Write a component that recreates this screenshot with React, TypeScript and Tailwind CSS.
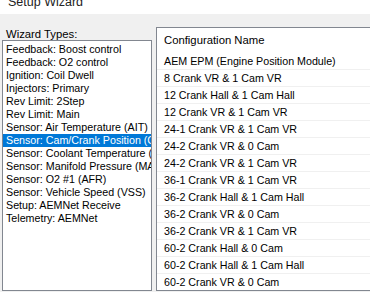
import React from 'react';

const wizardTypes = [
  'Feedback: Boost control',
  'Feedback: O2 control',
  'Ignition: Coil Dwell',
  'Injectors: Primary',
  'Rev Limit: 2Step',
  'Rev Limit: Main',
  'Sensor: Air Temperature (AIT)',
  'Sensor: Cam/Crank Position (CKP)',
  'Sensor: Coolant Temperature (CLT)',
  'Sensor: Manifold Pressure (MAP)',
  'Sensor: O2 #1 (AFR)',
  'Sensor: Vehicle Speed (VSS)',
  'Setup: AEMNet Receive',
  'Telemetry: AEMNet',
];

const configs = [
  'AEM EPM (Engine Position Module)',
  '8 Crank VR & 1 Cam VR',
  '12 Crank Hall & 1 Cam Hall',
  '12 Crank VR & 1 Cam VR',
  '24-1 Crank VR & 1 Cam VR',
  '24-2 Crank VR & 0 Cam',
  '24-2 Crank VR & 1 Cam VR',
  '36-1 Crank VR & 1 Cam VR',
  '36-2 Crank Hall & 1 Cam Hall',
  '36-2 Crank VR & 0 Cam',
  '36-2 Crank VR & 1 Cam VR',
  '60-2 Crank Hall & 0 Cam',
  '60-2 Crank Hall & 1 Cam Hall',
  '60-2 Crank VR & 0 Cam',
];

export default function App() {
  const selected = 7;

  return (
    <div className="w-[370px] h-[292px] overflow-hidden bg-[#f0f0f0] text-black font-['Liberation_Sans',Arial,sans-serif] text-[10.7px]">
      {/* title strip, cut off at the top */}
      <div className="h-[14px] bg-white overflow-hidden pl-[8px]">
        <div className="mt-[-5px] text-[12.5px] leading-[14px] text-[#222]">Setup Wizard</div>
      </div>

      <div className="flex h-[278px]">
        {/* Wizard types */}
        <div className="w-[150px] ml-[2px] flex flex-col">
          <div className="h-[26px] pt-[14px] pl-[4px] text-[11.3px] leading-[12px]">Wizard Types:</div>
          <div className="flex-1 mb-[1px] bg-white border border-[#828790] overflow-hidden pt-[2px] pl-[3px]">
            {wizardTypes.map((t, i) => (
              <div
                key={t}
                className={`h-[13px] leading-[13px] whitespace-nowrap -ml-[3px] pl-[3px] ${
                  i === selected ? 'bg-[#0078d7] text-white' : ''
                }`}
              >
                {t}
              </div>
            ))}
          </div>
        </div>

        {/* Configuration list */}
        <div className="ml-[4px] mt-[13px] mb-[1px] flex-1 bg-white border-t border-l border-b border-[#828790] overflow-hidden">
          <div className="h-[25px] leading-[25px] pl-[7px] text-[11.3px]">Configuration Name</div>
          {configs.map(c => (
            <div key={c} className="h-[17px] leading-[17px] pl-[7px] whitespace-nowrap border-b border-[#f0f0f0]">
              {c}
            </div>
          ))}
        </div>
      </div>
    </div>
  );
}
